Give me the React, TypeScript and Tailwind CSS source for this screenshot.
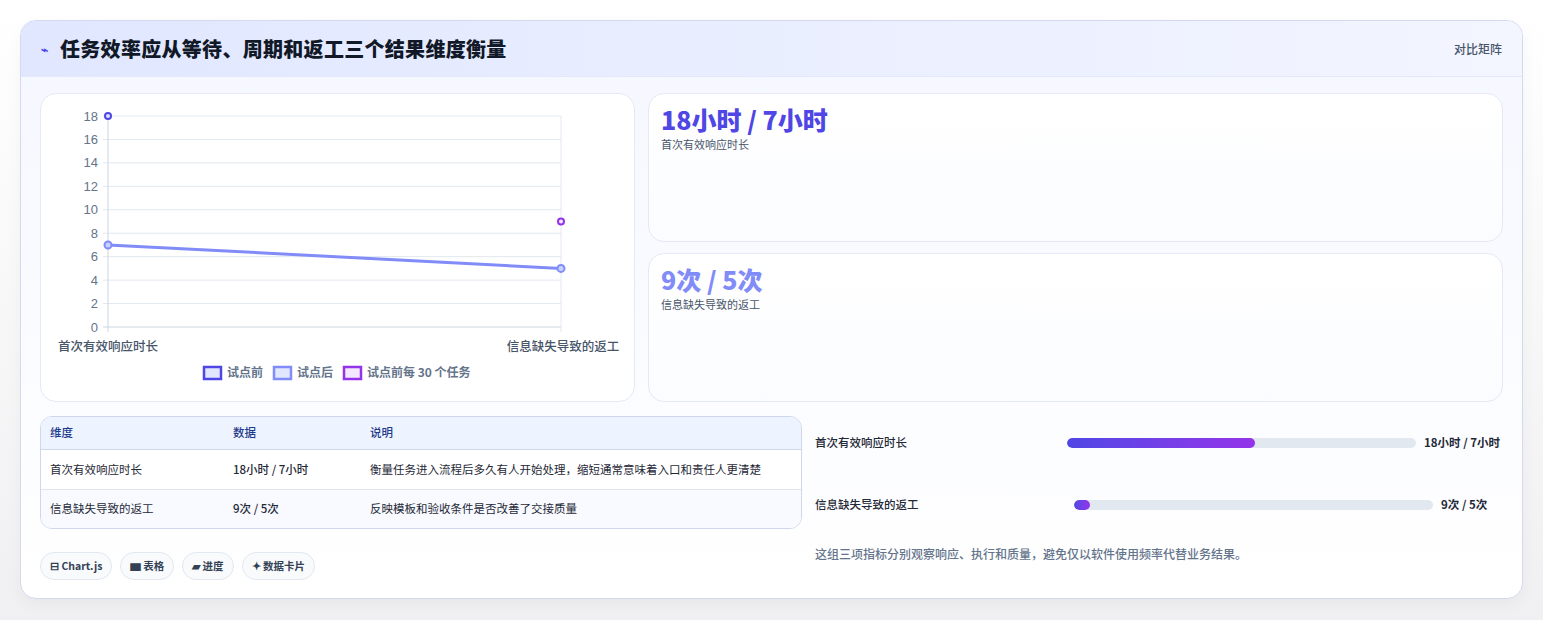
import React from "react";

const F = { fontFamily: '"Noto Sans CJK SC", "Noto Sans", sans-serif' };

function Chart() {
  const x0 = 67, x1 = 520, yTop = 22, yBot = 233;
  const y = (v: number) => yBot - (v / 18) * (yBot - yTop);
  const ticks = [0, 2, 4, 6, 8, 10, 12, 14, 16, 18];
  return (
    <svg width="594" height="308" className="block">
      {ticks.map((t) => (
        <g key={t}>
          <line x1={x0 - 5} x2={x1} y1={y(t)} y2={y(t)} stroke={t === 0 ? "#cbd5e1" : "#e2e8f0"} strokeWidth="1" />
          <text x={x0 - 10} y={y(t) + 4.5} textAnchor="end" fontSize="13" fill="#64748b" fontFamily="Liberation Sans, sans-serif">{t}</text>
        </g>
      ))}
      <line x1={x0} x2={x0} y1={yTop} y2={yBot + 5} stroke="#cbd5e1" />
      <line x1={x1} x2={x1} y1={yTop} y2={yBot + 5} stroke="#e2e8f0" />
      <text x={x0} y={257} textAnchor="middle" fontSize="12.5" fill="#475569" fontWeight="500" style={F}>首次有效响应时长</text>
      <text x={x1 + 2} y={257} textAnchor="middle" fontSize="12.5" fill="#475569" fontWeight="500" style={F}>信息缺失导致的返工</text>
      <line x1={x0} y1={y(7)} x2={x1} y2={y(5)} stroke="#818cf8" strokeWidth="3" />
      <circle cx={x0} cy={y(7)} r="3.5" fill="#c7d2fe" stroke="#818cf8" strokeWidth="2" />
      <circle cx={x1} cy={y(5)} r="3.5" fill="#c7d2fe" stroke="#818cf8" strokeWidth="2" />
      <circle cx={x0} cy={y(18)} r="3" fill="#e0e7ff" stroke="#4f46e5" strokeWidth="2" />
      <circle cx={x1} cy={y(9)} r="3" fill="#f3e8ff" stroke="#9333ea" strokeWidth="2" />
      <g fontSize="12" fill="#64748b" style={F} fontWeight="600">
        <rect x="163" y="273" width="17" height="12" fill="#e0e7ff" stroke="#4f46e5" strokeWidth="2.5" />
        <text x="186" y="283">试点前</text>
        <rect x="233" y="273" width="17" height="12" fill="#e0e7ff" stroke="#818cf8" strokeWidth="2.5" />
        <text x="256" y="283">试点后</text>
        <rect x="303" y="273" width="17" height="12" fill="#f3e8ff" stroke="#9333ea" strokeWidth="2.5" />
        <text x="326" y="283">试点前每 30 个任务</text>
      </g>
    </svg>
  );
}

export default function App() {
  return (
    <div className="min-h-[620px] bg-gradient-to-b from-white to-[#f0f0f2] pt-5 pl-5 pr-5" style={F}>
      <div className="w-[1503px] h-[579px] rounded-2xl border border-[#d4d9f0] bg-gradient-to-b from-[#f5f7ff] to-white overflow-hidden shadow-[0_6px_16px_rgba(0,0,0,0.04)]">
        <div className="h-[56px] flex items-center justify-between px-5 bg-gradient-to-r from-[#e0e7ff] to-[#f3f5ff] border-b border-[#e4e8fb]">
          <div className="flex items-center gap-3">
            <span className="text-[#4f46e5] text-[12px] font-bold">⌁</span>
            <span className="text-[20px] font-black text-[#111827] tracking-[0.3px]">任务效率应从等待、周期和返工三个结果维度衡量</span>
          </div>
          <span className="text-[12px] text-[#475569] font-medium">对比矩阵</span>
        </div>
        <div className="px-[19px] pt-[16px]">
          <div className="flex gap-[13px]">
            <div className="w-[595px] h-[309px] rounded-2xl border border-[#e5e8f5] bg-white">
              <Chart />
            </div>
            <div className="flex-1 flex flex-col gap-[11px]">
              <div className="h-[149px] rounded-2xl border border-[#e5e8f5] bg-gradient-to-b from-white to-[#fbfcff] px-3 pt-[9px]">
                <div className="text-[25px] font-black leading-[32px] text-[#4f46e5]">18小时 / 7小时</div>
                <div className="text-[11px] text-[#475569] mt-[1px]">首次有效响应时长</div>
              </div>
              <div className="h-[149px] rounded-2xl border border-[#e5e8f5] bg-gradient-to-b from-white to-[#fbfcff] px-3 pt-[9px]">
                <div className="text-[25px] font-black leading-[32px] text-[#818cf8]">9次 / 5次</div>
                <div className="text-[11px] text-[#475569] mt-[1px]">信息缺失导致的返工</div>
              </div>
            </div>
          </div>
          <div className="flex mt-[14px]">
            <div className="w-[762px]">
              <div className="rounded-xl border border-[#cfd8ea] overflow-hidden text-[11.5px]">
                <div className="flex h-[33px] items-center bg-[#eef4ff] text-[#1e3a8a] font-medium border-b border-[#cfd8ea]">
                  <div className="w-[192px] pl-[9px]">维度</div>
                  <div className="w-[137px]">数据</div>
                  <div className="flex-1">说明</div>
                </div>
                <div className="flex h-[40px] items-center bg-white text-[#1f2937] border-b border-[#dfe5f0]">
                  <div className="w-[192px] pl-[9px]">首次有效响应时长</div>
                  <div className="w-[137px] font-medium">18小时 / 7小时</div>
                  <div className="flex-1">衡量任务进入流程后多久有人开始处理，缩短通常意味着入口和责任人更清楚</div>
                </div>
                <div className="flex h-[38px] items-center bg-[#f8faff] text-[#1f2937]">
                  <div className="w-[192px] pl-[9px]">信息缺失导致的返工</div>
                  <div className="w-[137px] font-medium">9次 / 5次</div>
                  <div className="flex-1">反映模板和验收条件是否改善了交接质量</div>
                </div>
              </div>
              <div className="flex gap-2 mt-[23px] text-[10.5px] font-semibold text-[#334155]">
                <span className="h-[28px] px-[9px] flex items-center rounded-full border border-[#e2e8f0] bg-[#f8fafc]">⊟ Chart.js</span>
                <span className="h-[28px] px-[9px] flex items-center rounded-full border border-[#e2e8f0] bg-[#f8fafc]">▆ 表格</span>
                <span className="h-[28px] px-[9px] flex items-center rounded-full border border-[#e2e8f0] bg-[#f8fafc]">▰ 进度</span>
                <span className="h-[28px] px-[9px] flex items-center rounded-full border border-[#e2e8f0] bg-[#f8fafc]">✦ 数据卡片</span>
              </div>
            </div>
            <div className="flex-1 pl-[13px] text-[11.5px]">
              <div className="flex items-center h-[52px] mt-[1px]">
                <div className="w-[252px] text-[#1f2937] font-medium">首次有效响应时长</div>
                <div className="w-[349px] h-[10px] rounded-full bg-[#e2e8f0] overflow-hidden">
                  <div className="h-full w-[54%] rounded-full bg-gradient-to-r from-[#4f46e5] to-[#9333ea]" />
                </div>
                <div className="ml-2 font-bold text-[#1f2937]">18小时 / 7小时</div>
              </div>
              <div className="flex items-center h-[52px] mt-[10px]">
                <div className="w-[259px] text-[#1f2937] font-medium">信息缺失导致的返工</div>
                <div className="w-[359px] h-[10px] rounded-full bg-[#e2e8f0] overflow-hidden">
                  <div className="h-full w-[16px] rounded-full bg-gradient-to-r from-[#4f46e5] to-[#9333ea]" />
                </div>
                <div className="ml-2 font-bold text-[#1f2937]">9次 / 5次</div>
              </div>
              <div className="mt-[14px] text-[12px] text-[#64748b] font-medium">这组三项指标分别观察响应、执行和质量，避免仅以软件使用频率代替业务结果。</div>
            </div>
          </div>
        </div>
      </div>
    </div>
  );
}
